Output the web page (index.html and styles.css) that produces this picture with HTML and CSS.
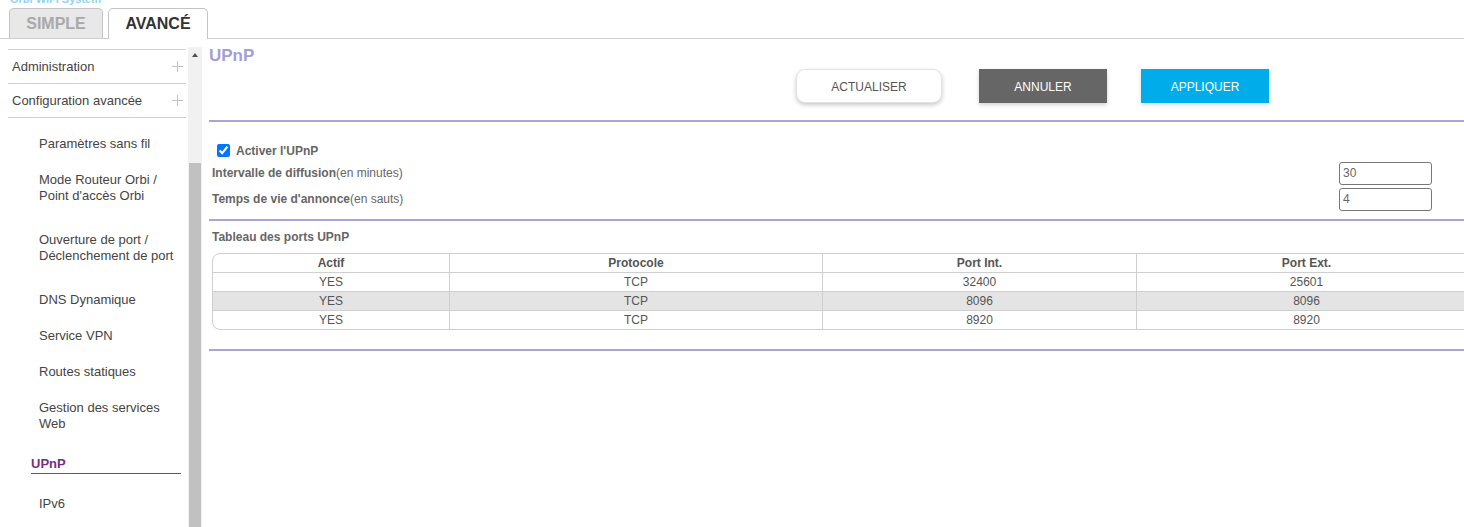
FILE: index.html
```html
<!DOCTYPE html>
<html lang="fr">
<head>
<meta charset="utf-8">
<title>UPnP</title>
<link rel="stylesheet" href="styles.css">
</head>
<body>
  <div class="topclip"><span>Orbi WiFi System</span></div>
  <div class="tabs">
    <div class="tab tab-simple">SIMPLE</div>
    <div class="tab tab-active">AVANCÉ</div>
  </div>
  <div class="layout">
    <aside class="sidebar">
      <div class="menu">
        <div class="menu-row"><span>Administration</span><span class="plus"></span></div>
        <div class="menu-row"><span>Configuration avancée</span><span class="plus"></span></div>
      </div>
      <ul class="submenu">
        <li class="sub">Paramètres sans fil</li>
        <li class="sub tall">Mode Routeur Orbi /<br>Point d'accès Orbi</li>
        <li class="sub tall">Ouverture de port /<br>Déclenchement de port</li>
        <li class="sub">DNS Dynamique</li>
        <li class="sub">Service VPN</li>
        <li class="sub">Routes statiques</li>
        <li class="sub mid">Gestion des services<br>Web</li>
        <li class="sub active">UPnP</li>
        <li class="sub">IPv6</li>
      </ul>
    </aside>
    <div class="scrollbar">
      <div class="scroll-arrow"></div>
      <div class="scroll-thumb"></div>
    </div>
    <main class="main">
      <h1 class="title">UPnP</h1>
      <div class="buttons">
        <button class="btn btn-refresh">ACTUALISER</button>
        <button class="btn btn-cancel">ANNULER</button>
        <button class="btn btn-apply">APPLIQUER</button>
      </div>
      <div class="rule rule-top"></div>
      <label class="check-row"><input type="checkbox" checked class="check"><span>Activer l'UPnP</span></label>
      <div class="field-row first">
        <span class="label"><b>Intervalle de diffusion</b>(en minutes)</span>
        <input class="field" type="text" value="30">
      </div>
      <div class="field-row">
        <span class="label"><b>Temps de vie d'annonce</b>(en sauts)</span>
        <input class="field" type="text" value="4">
      </div>
      <div class="rule rule-mid"></div>
      <div class="section-title">Tableau des ports UPnP</div>
      <table class="ports">
        <colgroup>
          <col class="c1"><col class="c2"><col class="c3"><col class="c4">
        </colgroup>
        <thead>
          <tr><th>Actif</th><th>Protocole</th><th>Port Int.</th><th>Port Ext.</th></tr>
        </thead>
        <tbody>
          <tr><td>YES</td><td>TCP</td><td>32400</td><td>25601</td></tr>
          <tr class="alt"><td>YES</td><td>TCP</td><td>8096</td><td>8096</td></tr>
          <tr><td>YES</td><td>TCP</td><td>8920</td><td>8920</td></tr>
        </tbody>
      </table>
      <div class="rule rule-bottom"></div>
    </main>
  </div>
</body>
</html>
```

FILE: styles.css
```css
html, body {
  margin: 0;
  padding: 0;
  overflow: hidden;
  background: #fff;
  height: 527px;
}
body {
  font-family: "Liberation Sans", Arial, sans-serif;
  color: #555;
}

.topclip {
  height: 8px;
  overflow: hidden;
  padding-left: 10px;
}
.topclip span {
  display: block;
  margin-top: -7px;
  font-size: 11px;
  line-height: 12px;
  font-weight: bold;
  color: #8fd4ef;
}

.tabs {
  display: flex;
  align-items: flex-end;
  gap: 5px;
  padding-left: 9px;
  height: 30px;
  border-bottom: 1px solid #cfcfcf;
}
.tab {
  box-sizing: border-box;
  height: 30px;
  border: 1px solid #c4c4c4;
  border-bottom: none;
  border-radius: 5px 5px 0 0;
  font-size: 16px;
  font-weight: bold;
  display: flex;
  align-items: center;
  justify-content: center;
}
.tab-simple {
  width: 94px;
  background: #e8e8e8;
  color: #a9a9a9;
}
.tab-active {
  width: 100px;
  height: 31px;
  margin-bottom: -1px;
  background: #fff;
  color: #333;
}

.layout {
  display: flex;
  align-items: flex-start;
}

.sidebar {
  flex: 0 0 178px;
  width: 178px;
  margin-left: 8px;
  padding-top: 10px;
  font-size: 13px;
}
.menu {
  border-bottom: 1px solid #d0d0d0;
}
.menu-row {
  height: 33px;
  border-top: 1px solid #d0d0d0;
  display: flex;
  align-items: center;
  justify-content: space-between;
  padding-left: 4px;
  color: #444;
}
.plus {
  position: relative;
  width: 11px;
  height: 11px;
  margin-right: 3px;
}
.plus::before, .plus::after {
  content: "";
  position: absolute;
  background: #c2c2c2;
}
.plus::before { left: 5px; top: 0; width: 1px; height: 11px; }
.plus::after { left: 0; top: 5px; width: 11px; height: 1px; }

.submenu {
  list-style: none;
  margin: 0;
  padding: 8px 0 0 0;
}
.sub {
  padding: 10px 0 10px 31px;
  line-height: 16px;
  color: #444;
  white-space: nowrap;
}
.sub.tall { padding-bottom: 18px; }
.sub.mid { padding-bottom: 14px; }
.sub.active {
  margin-left: 23px;
  margin-right: 5px;
  padding: 10px 0 1px 0;
  font-weight: bold;
  color: #7a2e7e;
  border-bottom: 1px solid #8a3a8c;
}
.sub.active + .sub { margin-top: 12px; padding-top: 10px; }

.scrollbar {
  flex: 0 0 14px;
  width: 14px;
  margin-left: 2px;
  margin-top: 8px;
  height: 480px;
  background: #f1f1f1;
  display: flex;
  flex-direction: column;
  align-items: center;
}
.scroll-arrow {
  margin-top: 6px;
  width: 0;
  height: 0;
  border-left: 3px solid transparent;
  border-right: 3px solid transparent;
  border-bottom: 4px solid #505050;
}
.scroll-thumb {
  margin-top: 106px;
  width: 12px;
  flex: 1;
  background: #c1c1c1;
}

.main {
  margin-left: 7px;
  flex: 0 0 1270px;
  width: 1270px;
  font-size: 12px;
  color: #666;
}
.title {
  margin: 0;
  padding-top: 7px;
  font-size: 17px;
  line-height: 20px;
  font-weight: bold;
  color: #a29ed8;
}
.buttons {
  display: flex;
  margin-top: 3px;
  margin-left: 587px;
}
.btn {
  height: 34px;
  font-family: "Liberation Sans", Arial, sans-serif;
  font-size: 12px;
  border: none;
  padding: 2px 0 0 0;
  cursor: pointer;
}
.btn-refresh {
  width: 146px;
  background: #fff;
  color: #555;
  border-radius: 9px;
  border: 1px solid #e4e4e4;
  box-shadow: 0 2px 4px rgba(0,0,0,0.22);
}
.btn-cancel {
  width: 128px;
  margin-left: 37px;
  background: #666;
  color: #fff;
  box-shadow: 0 2px 4px rgba(0,0,0,0.18);
}
.btn-apply {
  width: 128px;
  margin-left: 34px;
  background: #00acea;
  color: #fff;
  box-shadow: 0 2px 4px rgba(0,0,0,0.15);
}

.rule {
  height: 2px;
  background: #aaa6d4;
}
.rule-top { margin-top: 17px; }
.rule-mid { margin-top: 9px; }
.rule-bottom { margin-top: 19px; }

.check-row {
  display: flex;
  align-items: center;
  margin-top: 21px;
  height: 16px;
  padding-left: 8px;
  font-weight: bold;
  font-size: 12px;
  color: #666;
}
.check {
  margin: 0 6px 2px 0;
  width: 13px;
  height: 13px;
}

.field-row {
  display: flex;
  align-items: center;
  justify-content: space-between;
  height: 22px;
  margin-top: 4px;
  padding-left: 3px;
  width: 1220px;
}
.field-row.first { margin-top: 3px; }
.label b { font-weight: bold; }
.field {
  box-sizing: border-box;
  width: 93px;
  height: 23px;
  border: 1px solid #777;
  border-radius: 3px;
  padding: 0 3px;
  font-family: "Liberation Sans", Arial, sans-serif;
  font-size: 12px;
  color: #666;
}

.section-title {
  margin-top: 8px;
  padding-left: 3px;
  line-height: 16px;
  font-weight: bold;
}

.ports {
  margin-top: 8px;
  margin-left: 3px;
  width: 1265px;
  border-collapse: separate;
  border-spacing: 0;
  border: 1px solid #cfcfcf;
  border-radius: 8px;
  table-layout: fixed;
  font-size: 12px;
  color: #555;
}
.c1 { width: 236px; }
.c2 { width: 373px; }
.c3 { width: 314px; }
.ports th, .ports td {
  height: 18px;
  padding: 0;
  text-align: center;
  border-left: 1px solid #cfcfcf;
  border-top: 1px solid #cfcfcf;
  line-height: 18px;
}
.ports th { border-top: none; font-weight: bold; color: #555; }
.ports th:first-child, .ports td:first-child { border-left: none; }
.ports tr.alt td { background: #e4e4e4; }
```
